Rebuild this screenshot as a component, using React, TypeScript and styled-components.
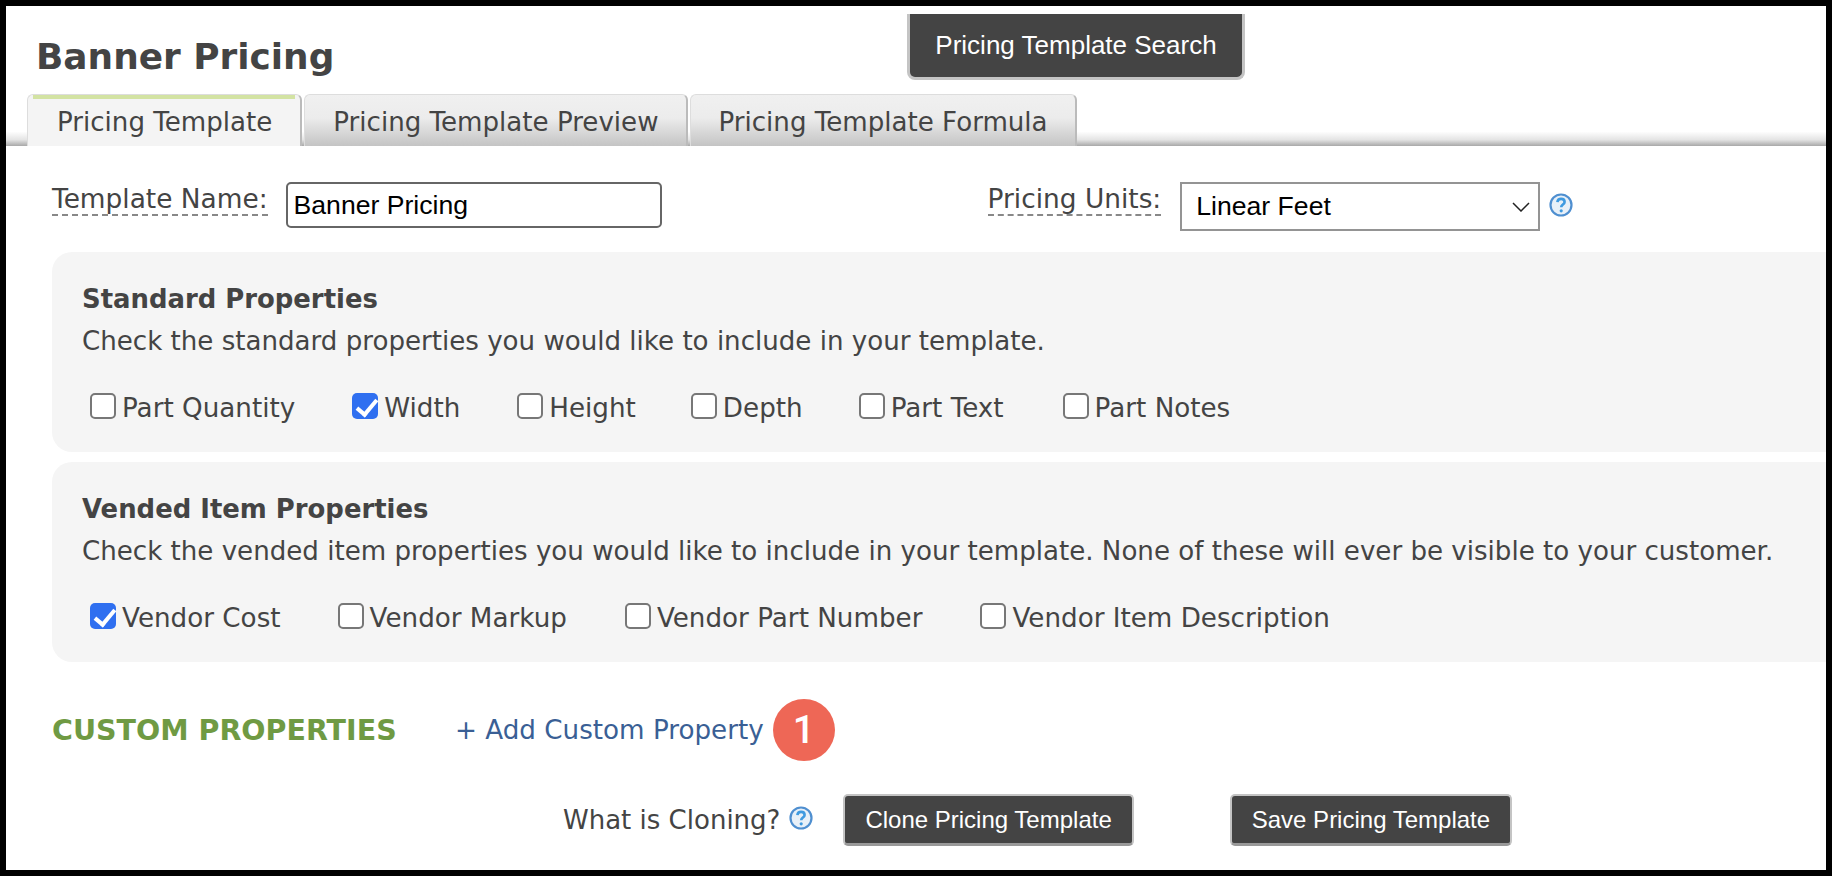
import styled, { createGlobalStyle } from "styled-components";

const standardProps = [
  { label: "Part Quantity", checked: false, gap: 57 },
  { label: "Width", checked: true, gap: 57 },
  { label: "Height", checked: false, gap: 55 },
  { label: "Depth", checked: false, gap: 56 },
  { label: "Part Text", checked: false, gap: 59 },
  { label: "Part Notes", checked: false, gap: 0 },
];

const vendedProps = [
  { label: "Vendor Cost", checked: true, gap: 57 },
  { label: "Vendor Markup", checked: false, gap: 58 },
  { label: "Vendor Part Number", checked: false, gap: 58 },
  { label: "Vendor Item Description", checked: false, gap: 0 },
];

const HelpIcon = () => (
  <HelpSvg viewBox="0 0 24 24">
    <circle cx="12" cy="12" r="10.5" fill="#e8f0f8" stroke="#4f8fd0" strokeWidth="2.200" />
    <path d="M8.4 9.2c.2-2.100 1.700-3.300 3.700-3.300 2.100 0 3.500 1.200 3.500 3 0 2.600-3.400 2.700-3.400 5.300" fill="none" stroke="#3f9ae0" strokeWidth="2.600" />
    <circle cx="12.200" cy="17.800" r="1.600" fill="#3f9ae0" />
  </HelpSvg>
);

const CheckItem = ({ label, checked, gap }: { label: string; checked: boolean; gap: number }) => (
  <CheckLabel $gap={gap}>
    <CheckBox type="checkbox" defaultChecked={checked} />
    {label}
  </CheckLabel>
);

const App = () => {
  return (
    <>
      <GlobalStyle />
      <Frame>
        <TitleRow>
          <PageTitle>Banner Pricing</PageTitle>
          <SearchButton type="button">Pricing Template Search</SearchButton>
        </TitleRow>
        <TabBar>
          <Tab $active>Pricing Template</Tab>
          <Tab>Pricing Template Preview</Tab>
          <Tab>Pricing Template Formula</Tab>
        </TabBar>
        <Content>
          <FormRow>
            <FieldLabel>Template Name:</FieldLabel>
            <NameInput defaultValue="Banner Pricing" />
            <UnitsLabel>Pricing Units:</UnitsLabel>
            <UnitsSelect>
              Linear Feet
              <Chevron viewBox="0 0 18 10">
                <path d="M1 1l8 8 8-8" fill="none" stroke="#222" strokeWidth="1.500" />
              </Chevron>
            </UnitsSelect>
            <HelpIcon />
          </FormRow>
          <Panel>
            <PanelTitle>Standard Properties</PanelTitle>
            <PanelText>Check the standard properties you would like to include in your template.</PanelText>
            <CheckRow>
              {standardProps.map(item => (
                <CheckItem key={item.label} {...item} />
              ))}
            </CheckRow>
          </Panel>
          <Panel>
            <PanelTitle>Vended Item Properties</PanelTitle>
            <PanelText>
              Check the vended item properties you would like to include in your template. None of these will ever be visible to your customer.
            </PanelText>
            <CheckRow>
              {vendedProps.map(item => (
                <CheckItem key={item.label} {...item} />
              ))}
            </CheckRow>
          </Panel>
          <CustomRow>
            <CustomTitle>CUSTOM PROPERTIES</CustomTitle>
            <AddLink href="#">+ Add Custom Property</AddLink>
            <Badge>1</Badge>
          </CustomRow>
          <ActionRow>
            <ActionText>What is Cloning?</ActionText>
            <HelpIcon />
            <ActionButton type="button" $left={30}>Clone Pricing Template</ActionButton>
            <ActionButton type="button" $left={96}>Save Pricing Template</ActionButton>
          </ActionRow>
        </Content>
      </Frame>
    </>
  );
};

const GlobalStyle = createGlobalStyle`
  html, body {
    margin: 0;
    padding: 0;
    background: #000;
  }
  * {
    box-sizing: border-box;
  }
`;

const Frame = styled.div`
  width: 1832px;
  height: 876px;
  border: 6px solid #000;
  background: #fff;
  overflow: hidden;
  font-family: "DejaVu Sans", Verdana, sans-serif;
  color: #444;
`;

const TitleRow = styled.div`
  display: flex;
  align-items: flex-start;
  height: 88px;
  padding: 8px 0 0 30px;
`;

const PageTitle = styled.h1`
  margin: 21px 0 0;
  width: 871px;
  font-size: 35.900px;
  line-height: 44px;
  font-weight: 700;
  color: #444;
`;

const SearchButton = styled.button`
  width: 338px;
  height: 66px;
  border: 3px solid #c4c4c4;
  border-top: none;
  border-radius: 0 0 8px 8px;
  background: #444;
  color: #fff;
  font-family: "Liberation Sans", Arial, sans-serif;
  font-size: 26px;
`;

const TabBar = styled.div`
  display: flex;
  gap: 2px;
  height: 52px;
  padding-left: 21px;
  background: linear-gradient(to bottom, #fff 50%, #fff 72%, #e4e4e4 88%, #a8a8a8 100%);
`;

const Tab = styled.div<{ $active?: boolean }>`
  display: flex;
  align-items: center;
  justify-content: center;
  padding: ${p => (p.$active ? "2px 28px 0 29px" : "2px 27px 0 28px")};
  font-size: 26.100px;
  color: #444;
  border-radius: 6px 6px 0 0;
  border-left: 1px solid #ddd;
  border-right: 2px solid #bbb;
  background: ${p =>
    p.$active
      ? "linear-gradient(#d3e3a3, #d3e3a3) 5px 0 / calc(100% - 10px) 4px no-repeat, #f4f4f4"
      : "linear-gradient(to bottom, #f0f0f0 0%, #ececec 45%, #c4c4c4 100%)"};
  border-top: 1px solid #ddd;
`;

const Content = styled.div`
  padding: 36px 0 0 46px;
`;

const FormRow = styled.div`
  display: flex;
  align-items: center;
  height: 49px;
`;

const FieldLabel = styled.span`
  font-size: 26.400px;
  border-bottom: 2px dashed #888;
  line-height: 30px;
  margin-top: -13px;
`;

const NameInput = styled.input`
  width: 376px;
  height: 46px;
  margin: -3px 0 0 18px;
  padding: 0 6px;
  border: 2px solid #666;
  border-radius: 5px;
  background: #fff;
  color: #000;
  font-family: "Liberation Sans", Arial, sans-serif;
  font-size: 26.600px;
  outline: none;
`;

const UnitsLabel = styled(FieldLabel)`
  margin-left: 326px;
`;

const UnitsSelect = styled.div`
  display: flex;
  align-items: center;
  justify-content: space-between;
  width: 360px;
  height: 49px;
  margin-left: 19px;
  padding: 0 8px 0 14px;
  border: 2px solid #949494;
  color: #000;
  font-family: "Liberation Sans", Arial, sans-serif;
  font-size: 26.600px;
`;

const Chevron = styled.svg`
  width: 18px;
  height: 10px;
`;

const HelpSvg = styled.svg`
  flex: none;
  width: 24px;
  height: 24px;
  margin: -4px 0 0 9px;
`;

const Panel = styled.section`
  height: 200px;
  margin-top: 10px;
  padding: 32px 0 0 30px;
  background: #f5f5f5;
  border-radius: 20px 0 0 20px;

  &:first-of-type {
    margin-top: 21px;
  }
`;

const PanelTitle = styled.div`
  font-size: 25.900px;
  line-height: 30px;
  font-weight: 700;
`;

const PanelText = styled.div`
  margin-top: 12px;
  font-size: 26.100px;
  line-height: 30px;
`;

const CheckRow = styled.div`
  display: flex;
  margin-top: 37px;
  padding-left: 8px;
`;

const CheckLabel = styled.label<{ $gap: number }>`
  display: flex;
  align-items: center;
  margin-right: ${p => p.$gap}px;
  font-size: 26.200px;
  line-height: 30px;
`;

const CheckBox = styled.input`
  appearance: none;
  position: relative;
  width: 26px;
  height: 26px;
  margin: -4px 6px 0 0;
  border: 2px solid #777;
  border-radius: 5px;
  background: #fff;

  &:checked {
    border: none;
    background: #2f6ff0;
  }

  &:checked::after {
    content: "";
    position: absolute;
    left: 9px;
    top: 2px;
    width: 8px;
    height: 17px;
    border: solid #fff;
    border-width: 0 4px 4px 0;
    transform: rotate(40deg);
  }
`;

const CustomRow = styled.div`
  display: flex;
  align-items: center;
  height: 62px;
  margin-top: 37px;
`;

const CustomTitle = styled.div`
  width: 403px;
  font-size: 28.500px;
  font-weight: 700;
  color: #6f9a43;
`;

const AddLink = styled.a`
  font-size: 26.200px;
  color: #3a5f95;
  text-decoration: none;
`;

const Badge = styled.div`
  display: flex;
  align-items: center;
  justify-content: center;
  width: 62px;
  height: 62px;
  margin-left: 9px;
  border-radius: 50%;
  background: #ee6756;
  color: #fff;
  font-family: Roboto, Arial, sans-serif;
  font-weight: 500;
  font-size: 39px;
`;

const ActionRow = styled.div`
  display: flex;
  align-items: center;
  height: 52px;
  margin-top: 33px;
  padding-left: 511px;
`;

const ActionText = styled.span`
  font-size: 26px;
`;

const ActionButton = styled.button<{ $left: number }>`
  height: 52px;
  margin-left: ${p => p.$left}px;
  padding: 0 20px;
  border: 2px solid #c4c4c4;
  border-bottom: 3px solid #999;
  border-radius: 5px;
  background: #444;
  color: #fff;
  font-family: "Liberation Sans", Arial, sans-serif;
  font-size: 24px;
`;

export default App;
